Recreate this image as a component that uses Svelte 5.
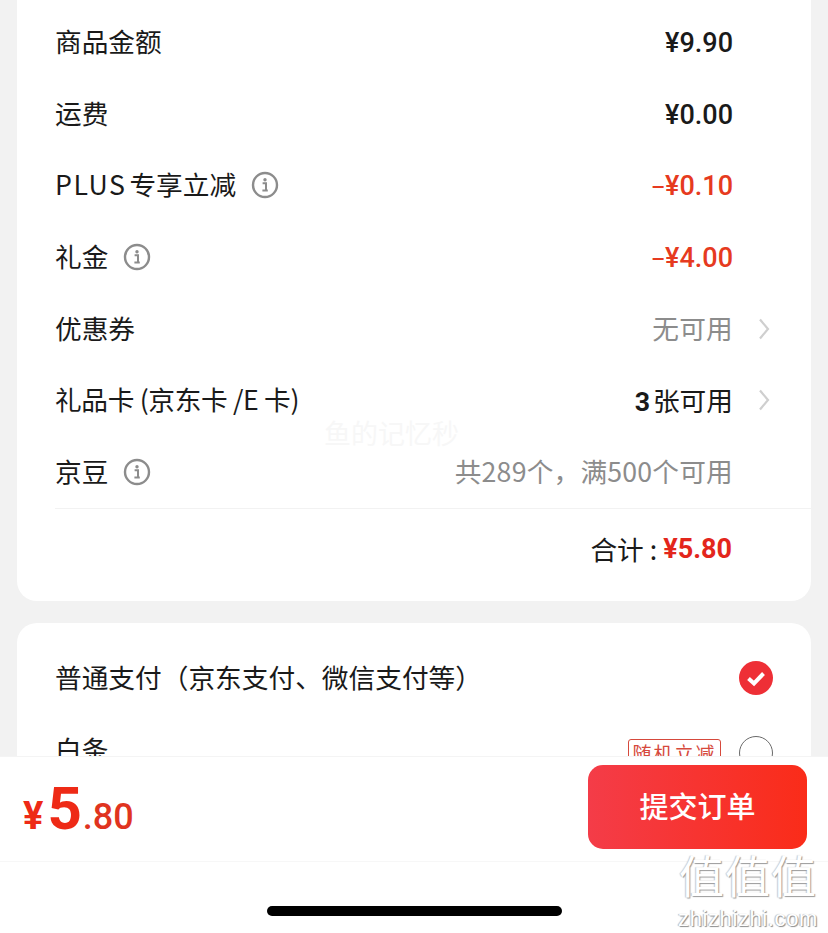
<script>
  const rows = [
    { label: "商品金额", value: "¥9.90", kind: "num" },
    { label: "运费", value: "¥0.00", kind: "num" },
    { prefix: "PLUS", label: "专享立减", minus: true, value: "¥0.10", kind: "red", info: true },
    { label: "礼金", minus: true, value: "¥4.00", kind: "red", info: true },
    { label: "优惠券", value: "无可用", kind: "gray", arrow: true },
    { label: "礼品卡 (京东卡 /E 卡)", count: "3", value: "张可用", kind: "dark", arrow: true, tight: true },
    { label: "京豆", value: "共289个，满500个可用", kind: "gray", info: true },
  ];
</script>

<div class="page">
  <section class="card summary">
    {#each rows as row}
      <div class="row">
        <span class="label" class:tight={row.tight}>
          {#if row.prefix}<span class="prefix">{row.prefix}</span>{/if}{row.label}
        </span>
        {#if row.info}
          <svg class="info" width="28" height="28" viewBox="0 0 28 28">
            <circle cx="14" cy="14" r="12" fill="none" stroke="#8c8c8c" stroke-width="2.4" />
            <circle cx="14" cy="8.8" r="1.7" fill="#8c8c8c" />
            <path d="M11.6 12.2h3.4v7.2M11.4 19.6h5.4" fill="none" stroke="#8c8c8c" stroke-width="2" />
          </svg>
        {/if}
        <span class="value {row.kind}">
          {#if row.minus}<span class="minus">–</span>{/if}{#if row.count}<b>{row.count}</b>{/if}{row.value}
        </span>
        {#if row.arrow}
          <svg class="arrow" width="12" height="22" viewBox="0 0 12 22">
            <path d="M2 1.5 10 11 2 20.5" fill="none" stroke="#cfcfcf" stroke-width="2.2" />
          </svg>
        {/if}
      </div>
    {/each}
    <div class="total">
      <span class="total-label">合计 :</span>
      <span class="total-value">¥5.80</span>
    </div>
  </section>

  <section class="card pay">
    <div class="pay-row">
      <span class="label">普通支付（京东支付、微信支付等）</span>
      <svg class="radio" width="34" height="34" viewBox="0 0 34 34">
        <circle cx="17" cy="17" r="17" fill="#ee2f36" />
        <path d="M9.5 17.5 15 22.5 24.5 12.5" fill="none" stroke="#fff" stroke-width="4" />
      </svg>
    </div>
    <div class="pay-row">
      <span class="label">白条</span>
      <span class="tag">随机立减</span>
      <span class="radio empty"></span>
    </div>
  </section>

  <footer class="bar">
    <div class="bar-main">
      <div class="price"><span class="yen">¥</span><span class="int">5</span><span class="dec">.80</span></div>
      <button class="submit">提交订单</button>
    </div>
    <div class="home"><span></span></div>
  </footer>

  <div class="mark">鱼的记忆秒</div>
  <div class="site">
    <div class="site-cn">值值值</div>
    <div class="site-en">zhizhizhi.com</div>
  </div>
</div>

<style>
  :global(body) {
    margin: 0;
    background: #f2f2f2;
  }

  .page {
    position: relative;
    height: 933px;
    overflow: hidden;
    background: #f2f2f2;
    color: #1a1a1a;
    font-family: "Noto Sans CJK SC", "Noto Sans", sans-serif;
    font-size: 26.7px;
    padding: 0 17px;
    box-sizing: border-box;
  }

  .card {
    background: #fff;
    border-radius: 20px;
    padding-left: 38px;
  }

  .summary {
    margin-top: -20px;
    padding-top: 26px;
    height: 621px;
    box-sizing: border-box;
  }

  .row {
    display: flex;
    align-items: center;
    height: 71.7px;
    padding-right: 78px;
  }

  .label {
    line-height: 36px;
    white-space: nowrap;
    margin-top: -2px;
  }

  .label.tight {
    letter-spacing: -0.35px;
  }

  .prefix {
    letter-spacing: 1.5px;
    margin-right: 3px;
  }

  .info {
    margin-left: 15px;
  }

  .value {
    margin-left: auto;
    margin-top: -2px;
    white-space: nowrap;
  }

  .num,
  .red {
    font-family: "Roboto", sans-serif;
    font-weight: 500;
    font-size: 27px;
    margin-top: 2px;
  }

  .minus {
    font-size: 22px;
  }

  .red {
    color: #e63a20;
  }

  .gray {
    color: #8c8c8c;
    letter-spacing: 0.2px;
  }

  .value b {
    font-family: "Roboto", sans-serif;
    font-weight: 700;
    margin-right: 3px;
  }

  .arrow {
    margin-left: 25px;
    margin-right: -37px;
  }

  .total {
    display: flex;
    justify-content: flex-end;
    align-items: center;
    gap: 6px;
    height: 80px;
    padding-right: 79px;
    border-top: 1px solid #f2f2f2;
  }

  .total-value {
    font-family: "Roboto", sans-serif;
    font-weight: 700;
    font-size: 27px;
    color: #e3261c;
  }

  .pay {
    margin-top: 22px;
    padding-top: 19px;
    height: 400px;
    box-sizing: border-box;
  }

  .pay-row {
    display: flex;
    align-items: center;
    height: 72px;
    padding-right: 38px;
  }

  .radio {
    flex: none;
    margin-left: auto;
  }

  .radio.empty {
    width: 34px;
    height: 34px;
    box-sizing: border-box;
    border: 1.5px solid #6a6a6a;
    border-radius: 50%;
    margin-left: 18px;
    margin-top: 6px;
  }

  .tag {
    margin-left: auto;
    margin-top: 6px;
    border: 1.5px solid #d6493c;
    border-radius: 3px;
    color: #d6493c;
    font-size: 19px;
    letter-spacing: 2px;
    line-height: 26px;
    width: 93px;
    box-sizing: border-box;
    text-align: center;
    white-space: nowrap;
  }

  .bar {
    position: absolute;
    left: 0;
    right: 0;
    bottom: 0;
    height: 177px;
    background: #fff;
    border-top: 1px solid #f4f4f4;
    box-sizing: border-box;
  }

  .bar-main {
    display: flex;
    align-items: center;
    justify-content: space-between;
    height: 100px;
    padding: 0 21px 4px 23px;
    border-bottom: 1px solid #f7f7f7;
  }

  .price {
    display: flex;
    align-items: baseline;
    color: #ee2a16;
    font-family: "Roboto", sans-serif;
    line-height: 1;
    margin-top: 4px;
  }

  .yen {
    font-size: 38px;
    font-weight: 700;
    margin-right: 4px;
  }

  .int {
    font-size: 60px;
    font-weight: 700;
  }

  .dec {
    font-size: 36px;
    font-weight: 500;
    color: #e0341f;
    margin-left: 1px;
  }

  .submit {
    width: 219px;
    height: 84px;
    border: none;
    border-radius: 15px;
    background: linear-gradient(90deg, #f43c48, #fa2c19);
    color: #fff;
    font-family: inherit;
    font-size: 29px;
    font-weight: 500;
    padding: 0 0 4px;
  }

  .home {
    display: flex;
    justify-content: center;
    padding-top: 44px;
  }

  .home span {
    width: 295px;
    height: 10px;
    border-radius: 5px;
    background: #000;
  }

  .mark {
    position: absolute;
    left: 324px;
    top: 414px;
    font-size: 27px;
    line-height: 38px;
    color: #f7f7f7;
    white-space: nowrap;
  }

  .site {
    position: absolute;
    right: 7px;
    top: 847px;
    width: 146px;
    text-align: center;
    color: #fff;
  }

  .site-cn {
    font-size: 45px;
    letter-spacing: 1px;
    line-height: 56px;
    white-space: nowrap;
    text-shadow: 1px 1px 1px #9a9a9a, -1px 0 1px #c8c8c8;
  }

  .site-en {
    font-family: "Liberation Sans", sans-serif;
    font-size: 22px;
    letter-spacing: 0.6px;
    line-height: 24px;
    margin-top: 4px;
    white-space: nowrap;
    text-shadow: 1px 1px 1px #8a8a8a, -1px 0 1px #b8b8b8;
  }
</style>
